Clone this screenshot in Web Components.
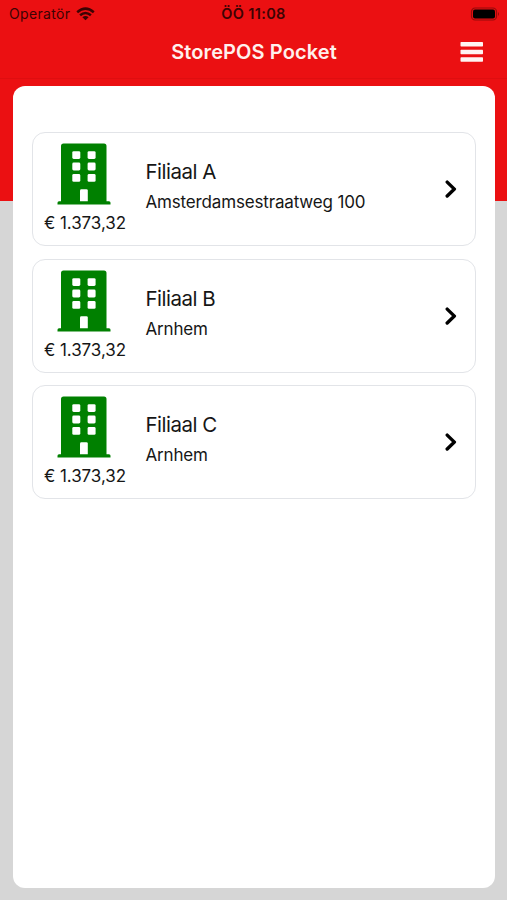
<!DOCTYPE html>
<html lang="nl">
<head>
<meta charset="utf-8">
<title>StorePOS Pocket</title>
<style>
body{margin:0;font-family:Inter,"Liberation Sans",sans-serif;color:#161616}
</style>
</head>
<body>
<pos-app></pos-app>
<script>
const define = (name, html) => customElements.define(name, class extends HTMLElement {
  constructor() {
    super();
    const t = document.createElement('template');
    t.innerHTML = html;
    this.attachShadow({mode: 'open'}).append(t.content.cloneNode(true));
  }
});

define('status-bar', `<style>
:host{display:grid;grid-template-columns:1fr auto 1fr;align-items:center;height:27px;box-sizing:border-box;padding:0 7px 0 9px;color:#3d0303}
.left{display:flex;align-items:center;gap:6px;font-size:14px;letter-spacing:.32px}
.time{font-size:14.5px;font-weight:600;letter-spacing:.35px;margin-right:2px}
.battery{justify-self:end}
svg{display:block}
</style>
<div class="left"><span>Operatör</span>
<svg width="19" height="14" viewBox="0 0 19 14" fill="none" stroke="#3d0303" stroke-width="2.5"><path d="M1.2 5.2Q9.5-2 17.8 5.2M4.1 8.3Q9.5 3.6 14.9 8.3"/><path d="M6.4 10.2Q9.5 7.6 12.6 10.2L9.5 13.3z" fill="#3d0303" stroke="none"/></svg></div>
<div class="time">ÖÖ 11:08</div>
<svg class="battery" width="30" height="14" viewBox="0 0 30 14"><rect x="1.5" y="1" width="25" height="12" rx="3.6" fill="none" stroke="#960a0a" stroke-width="1.2"/><rect x="3" y="2.5" width="22" height="9" rx="2" fill="#000"/><path d="M28 5q2 2 0 4z" fill="#960a0a"/></svg>`);

define('nav-bar', `<style>
:host{display:grid;grid-template-columns:1fr auto 1fr;align-items:center;height:52px;box-sizing:border-box;padding:0 24px 1px;border-bottom:1px solid #df0e10;color:#fff}
h1{grid-column:2;margin:0 0 0 1px;font-size:20px;line-height:24px;font-weight:600;letter-spacing:.1px;color:#fff0ed}
svg{justify-self:end;display:block}
</style>
<h1><slot></slot></h1>
<svg width="23" height="20" viewBox="0 0 23 20" fill="#fff4f2"><rect x=".5" width="22.5" height="4.5" rx=".7"/><rect x=".5" y="7.7" width="22.5" height="4.5" rx=".7"/><rect x=".5" y="15.3" width="22.5" height="4.5" rx=".7"/></svg>`);

define('building-icon', `<style>:host{display:block}svg{display:block}</style>
<svg width="54" height="62" viewBox="0 0 54 62"><path fill="#008000" d="M6.5 .5H47Q49.5 .5 49.5 3V58.2H52Q53.5 58.2 53.5 59.7V61.5H.5V59.7Q.5 58.2 2 58.2H4V3Q4 .5 6.5 .5z"/><g fill="#fff"><rect x="15.3" y="8.2" width="8" height="7.8" rx="1.4"/><rect x="30.6" y="8.2" width="8" height="7.8" rx="1.4"/><rect x="15.3" y="19.6" width="8" height="7.8" rx="1.4"/><rect x="30.6" y="19.6" width="8" height="7.8" rx="1.4"/><rect x="15.3" y="31" width="8" height="7.8" rx="1.4"/><rect x="30.6" y="31" width="8" height="7.8" rx="1.4"/><path d="M23 47.6q0-1.4 1.4-1.4h5q1.4 0 1.4 1.4v10.6H23z"/></g></svg>`);

define('branch-card', `<style>
:host{display:grid;grid-template-columns:104px 1fr 12px;column-gap:9px;box-sizing:border-box;height:114px;padding:0 18px 0 0;border:1px solid #e2e4e8;border-radius:13px;background:#fff}
.side{display:flex;flex-direction:column;align-items:center;padding-top:10px;gap:7px}
building-icon{margin-right:1px}
.price{font-size:17px;line-height:22px;letter-spacing:-.06px;white-space:nowrap;margin-left:1px}
.info{padding-top:26px}
.name{font-size:20.5px;line-height:26px;letter-spacing:-.5px}
.place{margin-top:6px;font-size:17px;line-height:22px;letter-spacing:-.16px}
.chevron{align-self:center;display:block}
</style>
<div class="side"><building-icon></building-icon><div class="price"><slot name="price"></slot></div></div>
<div class="info"><div class="name"><slot name="name"></slot></div><div class="place"><slot name="place"></slot></div></div>
<svg class="chevron" width="12" height="18" viewBox="0 0 12 18" fill="none" stroke="#000" stroke-width="3.4" stroke-linecap="round" stroke-linejoin="round"><path d="M2.2 2.1L9.4 9.1 2.2 16"/></svg>`);

define('content-panel', `<style>
:host{display:flex;flex-direction:column;gap:12.7px;box-sizing:border-box;margin:7.3px 12.5px 12.5px 13px;padding:45.6px 18.5px 0;border-radius:12px;background:#fff}
</style><slot></slot>`);

define('pos-app', `<style>
:host{display:grid;grid-template-rows:27px 52px 1fr;height:900px;background:linear-gradient(#eb1012 201px,#d6d6d6 201px)}
</style>
<status-bar></status-bar>
<nav-bar>StorePOS Pocket</nav-bar>
<content-panel>
<branch-card><span slot="price">€ 1.373,32</span><span slot="name">Filiaal A</span><span slot="place">Amsterdamsestraatweg 100</span></branch-card>
<branch-card><span slot="price">€ 1.373,32</span><span slot="name">Filiaal B</span><span slot="place">Arnhem</span></branch-card>
<branch-card><span slot="price">€ 1.373,32</span><span slot="name">Filiaal C</span><span slot="place">Arnhem</span></branch-card>
</content-panel>`);
</script>
</body>
</html>
